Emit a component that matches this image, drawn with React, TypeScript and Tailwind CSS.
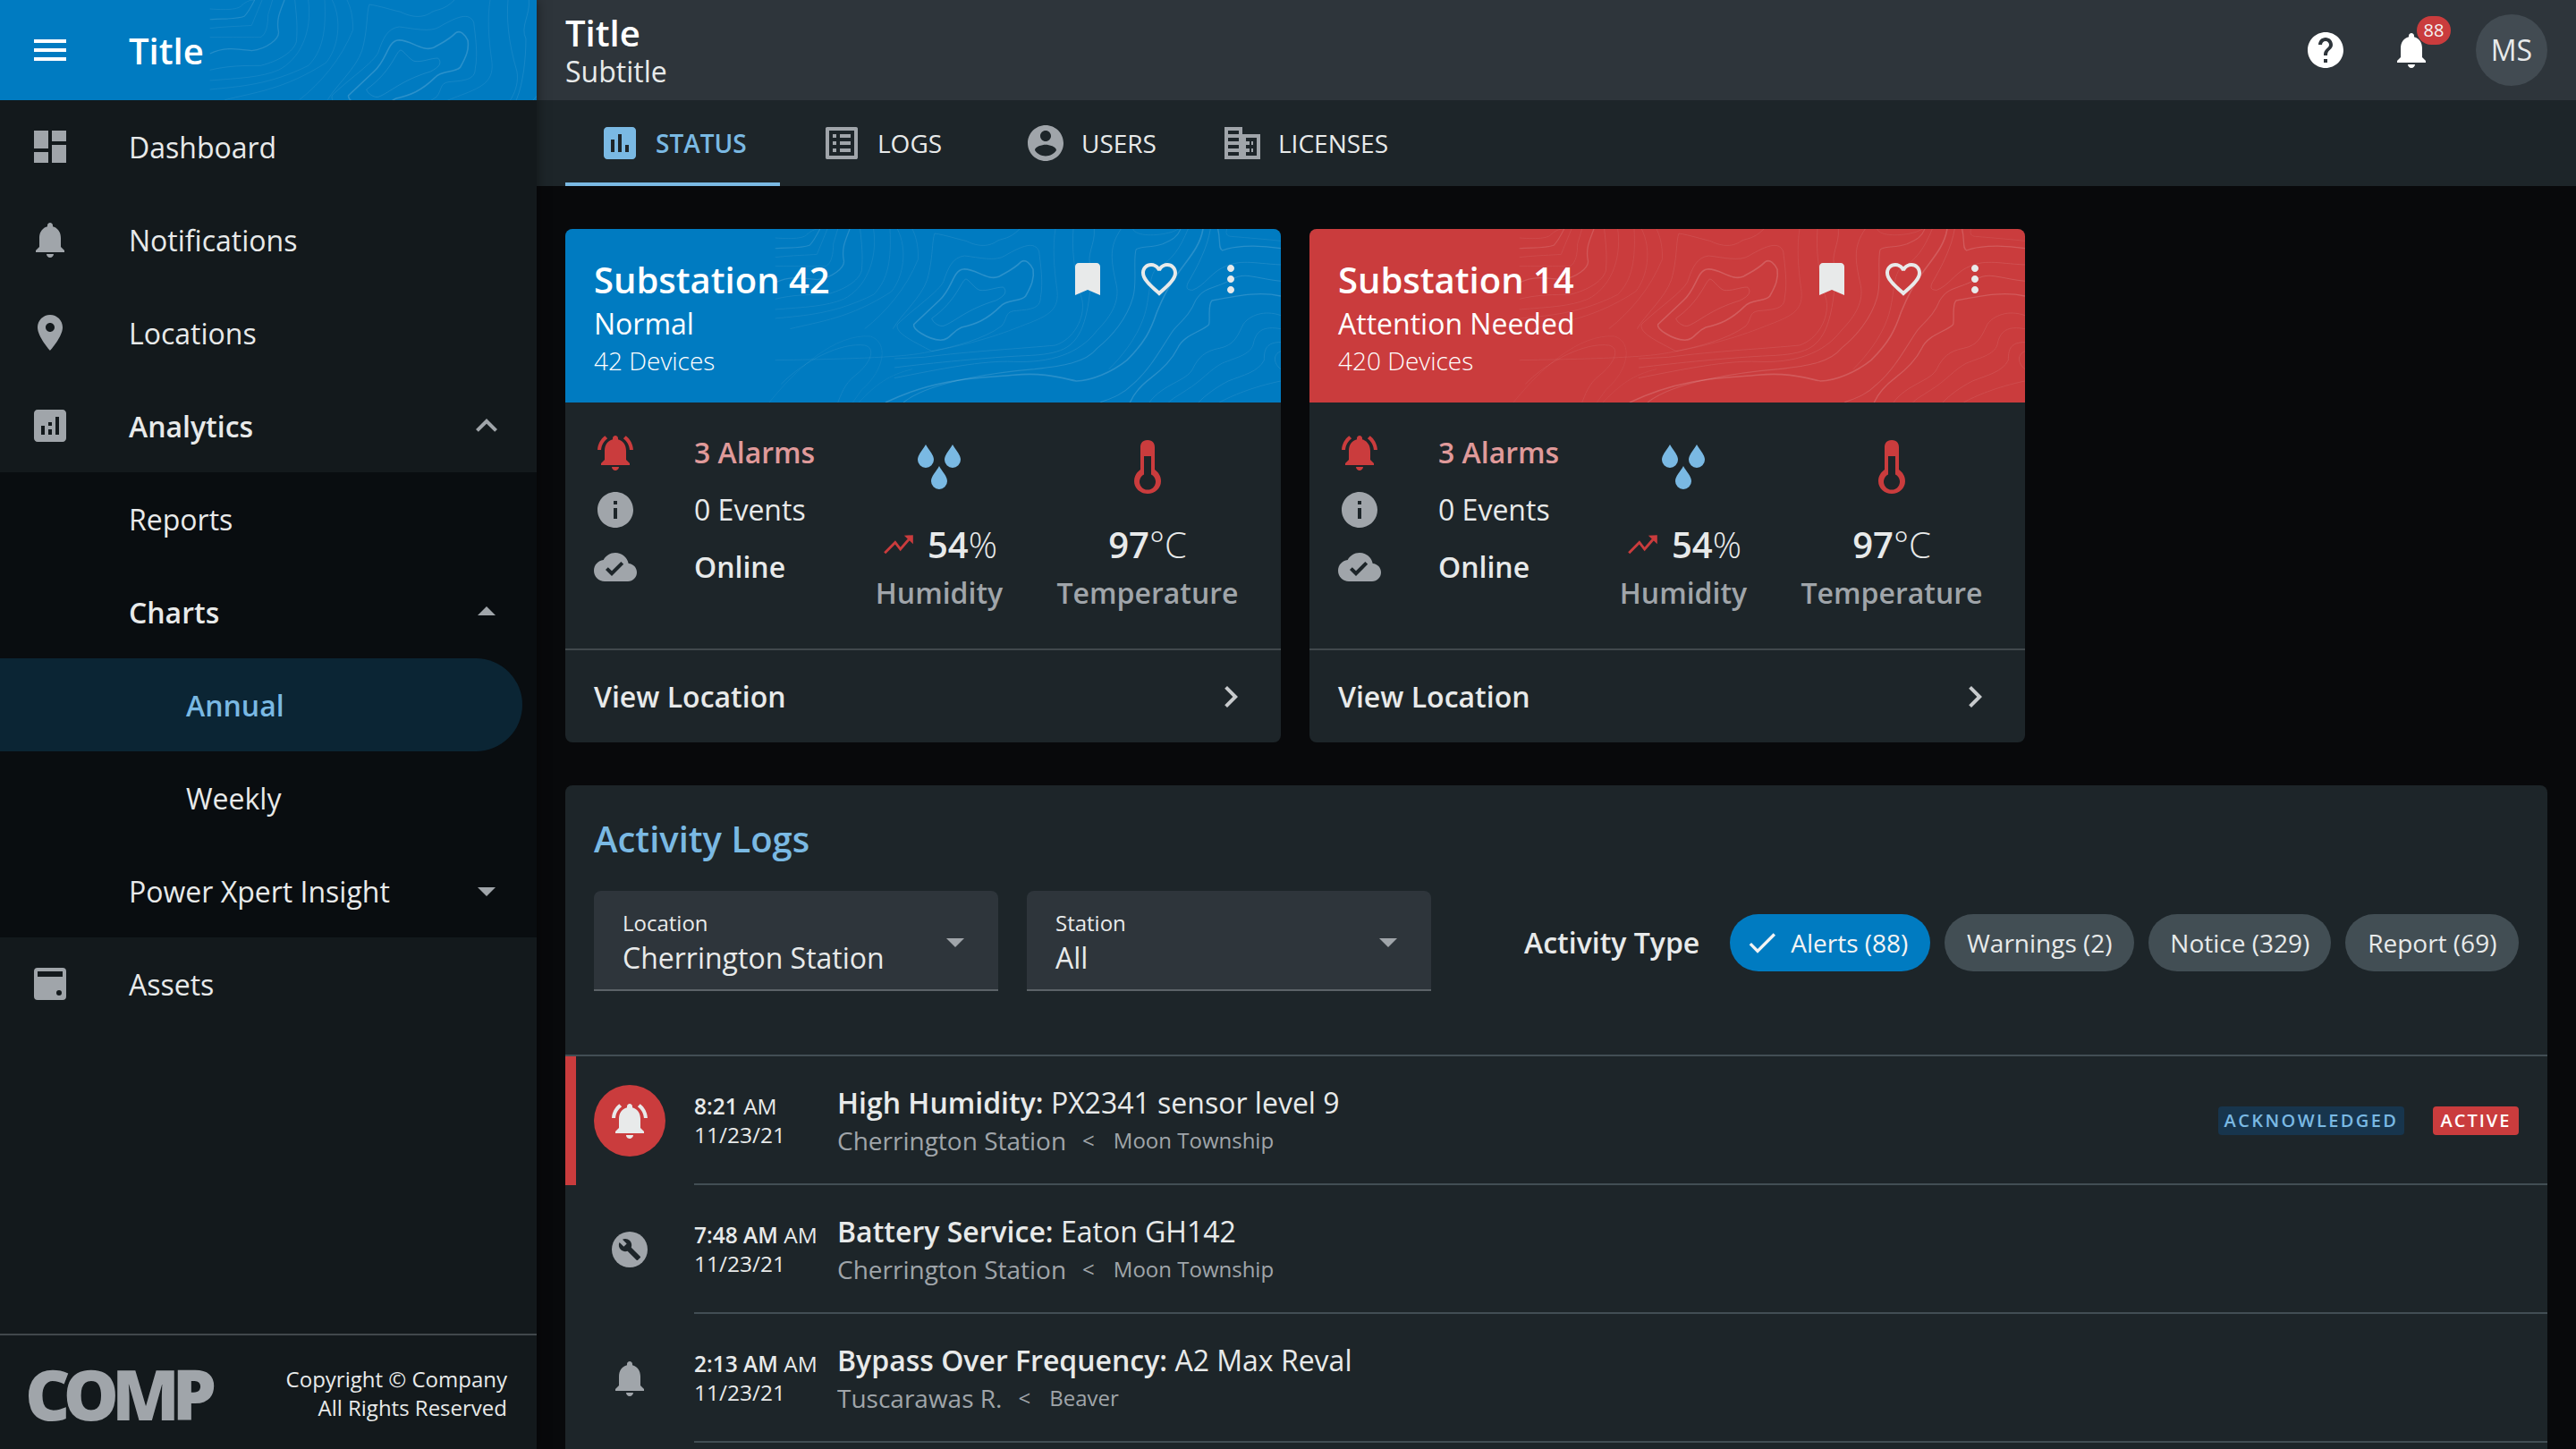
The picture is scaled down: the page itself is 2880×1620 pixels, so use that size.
import type { ReactNode } from "react";

const ICONS = {
  menu: "M3 18h18v-2H3v2zm0-5h18v-2H3v2zm0-7v2h18V6H3z",
  dashboard: "M3 13h8V3H3v10zm0 8h8v-6H3v6zm10 0h8V11h-8v10zm0-18v6h8V3h-8z",
  bell: "M12 22c1.1 0 2-.9 2-2h-4c0 1.1.89 2 2 2zm6-6v-5c0-3.07-1.64-5.64-4.5-6.32V4c0-.83-.67-1.5-1.5-1.5s-1.5.67-1.5 1.5v.68C7.63 5.36 6 7.92 6 11v5l-2 2v1h16v-1l-2-2z",
  bellActive:
    "M7.58 4.08L6.15 2.65C3.75 4.48 2.17 7.3 2.03 10.5h2c.15-2.65 1.51-4.97 3.55-6.42zm12.39 6.42h2c-.15-3.2-1.73-6.02-4.12-7.85l-1.42 1.43c2.02 1.45 3.39 3.77 3.54 6.42zM18 11c0-3.07-1.64-5.64-4.5-6.32V4c0-.83-.67-1.5-1.5-1.5s-1.5.67-1.5 1.5v.68C7.63 5.36 6 7.92 6 11v5l-2 2v1h16v-1l-2-2v-5zm-6 11c.14 0 .27-.01.4-.04.65-.14 1.18-.58 1.44-1.18.1-.24.15-.5.15-.78h-4c.01 1.1.9 2 2.01 2z",
  place:
    "M12 2C8.13 2 5 5.13 5 9c0 5.25 7 13 7 13s7-7.75 7-13c0-3.87-3.13-7-7-7zm0 9.5c-1.38 0-2.5-1.12-2.5-2.5s1.12-2.5 2.5-2.5 2.5 1.12 2.5 2.5-1.12 2.5-2.5 2.5z",
  analytics:
    "M19 3H5c-1.1 0-2 .9-2 2v14c0 1.1.9 2 2 2h14c1.1 0 2-.9 2-2V5c0-1.1-.9-2-2-2zM9 17H7v-5h2v5zm4 0h-2v-3h2v3zm0-5h-2v-2h2v2zm4 5h-2V7h2v10z",
  assessment:
    "M19 3H5c-1.1 0-2 .9-2 2v14c0 1.1.9 2 2 2h14c1.1 0 2-.9 2-2V5c0-1.1-.9-2-2-2zM9 17H7v-7h2v7zm4 0h-2V7h2v10zm4 0h-2v-4h2v4z",
  assets:
    "M5 3h14a2 2 0 0 1 2 2v14a2 2 0 0 1-2 2H5a2 2 0 0 1-2-2V5a2 2 0 0 1 2-2zm0 2v3h14V5H5zm12 10.5a1.5 1.5 0 1 0 0 3 1.5 1.5 0 0 0 0-3z",
  expandLess: "M12 8l-6 6 1.41 1.41L12 10.83l4.59 4.58L18 14z",
  dropUp: "M7 14l5-5 5 5z",
  dropDown: "M7 10l5 5 5-5z",
  help: "M12 2C6.48 2 2 6.48 2 12s4.48 10 10 10 10-4.48 10-10S17.52 2 12 2zm1 17h-2v-2h2v2zm2.07-7.75l-.9.92C13.45 12.9 13 13.5 13 15h-2v-.5c0-1.1.45-2.1 1.17-2.83l1.24-1.26c.37-.36.59-.86.59-1.41 0-1.1-.9-2-2-2s-2 .9-2 2H8c0-2.21 1.79-4 4-4s4 1.79 4 4c0 .88-.36 1.68-.93 2.25z",
  listAlt:
    "M19 5v14H5V5h14m1.1-2H3.9c-.5 0-.9.4-.9.9v16.2c0 .4.4.9.9.9h16.2c.4 0 .9-.5.9-.9V3.9c0-.5-.5-.9-.9-.9zM11 7h6v2h-6V7zm0 4h6v2h-6v-2zm0 4h6v2h-6zM7 7h2v2H7zm0 4h2v2H7zm0 4h2v2H7z",
  account:
    "M12 2C6.48 2 2 6.48 2 12s4.48 10 10 10 10-4.48 10-10S17.52 2 12 2zm0 3c1.66 0 3 1.34 3 3s-1.34 3-3 3-3-1.34-3-3 1.34-3 3-3zm0 14.2c-2.5 0-4.71-1.28-6-3.22.03-1.99 4-3.08 6-3.08 1.99 0 5.97 1.09 6 3.08-1.29 1.94-3.5 3.22-6 3.22z",
  business:
    "M2 3h10v4h10v14H2V3zM4 5v2h6V5H4zM4 9v2h6V9H4zM4 13v2h6v-2H4zM4 17v2h6v-2H4zM14 9v2h2v2h-2v2h2v2h-2v2h6V9h-6zM17 11v2h1v-2h-1zM17 15v2h1v-2h-1z",
  bookmark: "M17 3H7c-1.1 0-2 .9-2 2v16l7-3 7 3V5c0-1.1-.9-2-2-2z",
  heart:
    "M16.5 3c-1.74 0-3.41.81-4.5 2.09C10.91 3.81 9.24 3 7.5 3 4.42 3 2 5.42 2 8.5c0 3.78 3.4 6.86 8.55 11.54L12 21.35l1.45-1.32C18.6 15.36 22 12.28 22 8.5 22 5.42 19.58 3 16.5 3zm-4.4 15.55l-.1.1-.1-.1C7.14 14.24 4 11.39 4 8.5 4 6.5 5.5 5 7.5 5c1.54 0 3.04.99 3.57 2.36h1.87C13.46 5.99 14.96 5 16.5 5c2 0 3.5 1.5 3.5 3.5 0 2.89-3.14 5.74-7.9 10.05z",
  more: "M12 8c1.1 0 2-.9 2-2s-.9-2-2-2-2 .9-2 2 .9 2 2 2zm0 2c-1.1 0-2 .9-2 2s.9 2 2 2 2-.9 2-2-.9-2-2-2zm0 6c-1.1 0-2 .9-2 2s.9 2 2 2 2-.9 2-2-.9-2-2-2z",
  info: "M12 2C6.48 2 2 6.48 2 12s4.48 10 10 10 10-4.48 10-10S17.52 2 12 2zm1 15h-2v-6h2v6zm0-8h-2V7h2v2z",
  cloudDone:
    "M19.35 10.04C18.67 6.59 15.64 4 12 4 9.11 4 6.6 5.64 5.35 8.04 2.34 8.36 0 10.91 0 14c0 3.31 2.69 6 6 6h13c2.76 0 5-2.24 5-5 0-2.64-2.05-4.78-4.65-4.96zM10 17l-3.5-3.5 1.41-1.41L10 14.17 15.18 9l1.41 1.41L10 17z",
  chevron: "M10 6L8.59 7.41 13.17 12l-4.58 4.59L10 18l6-6z",
  check: "M9 16.17L4.83 12l-1.42 1.41L9 19 21 7l-1.41-1.41z",
};

function Icon({ d, className = "w-12 h-12" }: { d: string; className?: string }) {
  return (
    <svg viewBox="0 0 24 24" className={`${className} shrink-0 fill-current`} fillRule="evenodd">
      <path d={d} />
    </svg>
  );
}

// contour lines of the header background, the same picture in the sidebar and the cards
const TOPO: [string, number, number][] = [
  ["M240 168C225 170 210 240 125 300C130 315 150 328 165 325C205 310 240 270 340 240C370 225 380 210 365 195C340 195 310 210 285 205C270 200 250 170 240 168Z", 0.2, 1.5],
  ["M230 135C195 140 195 200 150 240L65 320C60 335 110 370 155 373C190 370 190 345 225 330C270 320 310 305 355 260C375 235 425 245 440 225C460 190 470 165 465 135C455 115 440 100 425 110C400 135 385 140 350 160C310 175 270 130 230 135Z", 0.26, 3],
  ["M235 90C195 95 180 130 165 175C150 210 60 270 10 320C0 350 70 380 125 410C200 395 300 370 360 325C380 300 370 280 400 275C450 270 490 270 490 230C500 180 490 120 485 75C470 40 430 55 370 90C340 110 280 95 235 90Z", 0.16, 1.5],
  ["M135 15C125 40 130 100 110 170C90 230 20 290 -5 335M135 15C170 20 215 35 240 40C270 55 310 65 345 40C365 30 385 35 420 0", 0.16, 1.5],
  ["M540 0C530 60 535 130 545 200C555 270 520 290 440 320C400 335 300 380 100 415C50 425 -50 435 -400 440", 0.14, 1.5],
  ["M600 0C595 60 600 140 630 240C640 300 600 370 540 390C440 400 250 410 100 430L0 435", 0.16, 1.5],
  ["M670 0C675 50 640 90 660 130C660 200 650 280 630 330C600 400 560 420 440 425C320 430 120 450 0 465", 0.18, 1.5],
  ["M760 0C720 60 725 100 745 190C755 240 730 290 680 340C620 420 520 450 400 445C300 440 150 470 0 500", 0.18, 1.5],
  ["M960 0C950 25 935 35 900 50C860 65 820 55 810 70C800 110 815 180 800 230C780 300 730 360 680 400C640 450 560 460 470 470C350 480 120 510 30 582", 0.2, 2],
  ["M1035 0C1025 60 985 100 950 150C920 190 900 230 880 280C860 340 840 380 780 440C730 480 660 510 610 510C560 500 500 480 400 490C300 500 150 495 -30 582", 0.24, 3],
  ["M985 0C960 60 930 110 880 130C850 160 860 230 835 300C810 370 760 430 720 470", 0.16, 1.5],
  ["M800 0C810 25 880 25 930 10C945 5 950 0 955 0", 0.14, 1.5],
  ["M1060 0C1050 60 1020 120 985 180C975 200 985 205 1000 205C1040 190 1060 150 1100 130C1160 100 1200 115 1296 120", 0.2, 1.5],
  ["M1085 0C1095 40 1085 65 1100 72C1130 60 1200 50 1296 65", 0.24, 2.5],
  ["M1115 0C1110 15 1115 25 1130 25C1190 30 1250 35 1296 40", 0.14, 1.5],
  ["M1296 175C1220 170 1180 140 1130 170C1080 200 1040 190 1010 240C990 290 960 310 935 340C900 390 860 470 800 520C760 560 720 570 690 582", 0.2, 2],
  ["M1296 225C1230 210 1170 220 1065 240C1050 255 1060 300 1055 320C1030 345 970 355 950 400C930 440 900 470 860 500C820 530 800 560 790 582", 0.24, 2.5],
  ["M1296 290C1240 270 1190 290 1170 320C1150 360 1140 390 1090 400C1040 410 1020 430 1000 470C980 510 900 520 855 582", 0.18, 1.5],
  ["M1296 335C1240 325 1215 340 1205 380C1200 420 1150 430 1100 450C1060 470 1030 510 980 540C950 560 930 570 920 582", 0.16, 1.5],
  ["M1296 380C1250 380 1240 400 1240 440C1220 480 1170 490 1120 510C1080 530 1040 560 1020 582", 0.18, 1.5],
  ["M1296 410C1270 420 1270 450 1296 470", 0.18, 1.5],
  ["M1296 510C1200 530 1130 560 1090 582", 0.16, 1.5],
  ["M-400 30C-330 35 -300 30 -290 15C-280 8 -270 0 -250 0", 0.14, 1.5],
  ["M-400 65C-350 62 -310 65 -285 55C-270 40 -260 20 -250 0", 0.2, 2],
  ["M-400 95C-340 88 -290 88 -260 85L-225 0", 0.14, 1.5],
  ["M-400 125C-330 125 -260 125 -230 125C-210 115 -205 80 -205 50L-190 0", 0.14, 1.5],
  ["M-400 180C-350 155 -300 165 -260 170C-210 165 -165 130 -170 105C-178 65 -165 40 -150 0", 0.22, 2.5],
  ["M-400 235C-340 220 -280 220 -230 220C-170 205 -120 175 -110 140C-105 90 -110 50 -115 0", 0.16, 1.5],
  ["M-400 270C-300 262 -230 260 -170 235C-100 200 -55 110 -70 0", 0.14, 1.5],
  ["M-400 300C-300 290 -200 285 -70 220C-20 170 -10 100 -15 0", 0.14, 1.5],
  ["M-350 335C-250 310 -150 300 -10 210C30 160 45 70 10 0", 0.14, 1.5],
  ["M-100 335C-30 280 40 200 80 100C80 50 70 20 60 0", 0.14, 1.5],
  ["M-380 520C-300 440 -180 380 -100 390C-60 400 -80 450 -130 490C-170 520 -180 560 -190 582", 0.14, 1.5],
  ["M-420 582C-330 470 -200 350 -80 360C-20 380 -30 470 -110 540L-140 582", 0.1, 1.5],
  ["M-120 582C-60 520 -20 490 60 470", 0.1, 1.5],
];

function TopoLines() {
  return (
    <svg width="800" height="194" className="absolute left-0 top-0 pointer-events-none" fill="none">
      <g transform="translate(368 0) scale(0.3333)">
        {TOPO.map(([d, o, w], i) => (
          <path key={i} d={d} stroke="#ffffff" strokeOpacity={o * 0.65} strokeWidth={w * 1.6} />
        ))}
      </g>
    </svg>
  );
}

function NavRow({
  icon,
  label,
  strong,
  right,
  indent = "pl-[144px]",
  active,
}: {
  icon?: string;
  label: string;
  strong?: boolean;
  right?: string;
  indent?: string;
  active?: boolean;
}) {
  return (
    <div
      className={`relative flex h-[104px] items-center ${active ? "w-[584px] rounded-r-full bg-[#0b2534]" : ""}`}
    >
      {icon && (
        <span className="absolute left-8 text-[#a0a5aa]">
          <Icon d={icon} />
        </span>
      )}
      <span
        className={`${indent} pt-px text-[32px] ${strong ? "font-semibold" : ""} ${active ? "font-semibold text-[#7ab9e3]" : "text-[#e8eaea]"}`}
      >
        {label}
      </span>
      {right && (
        <span className="absolute right-8 text-[#a0a5aa]">
          <Icon d={right} />
        </span>
      )}
    </div>
  );
}

function Sidebar() {
  return (
    <aside className="relative z-10 flex h-full w-[600px] shrink-0 flex-col bg-[#13191c] shadow-[0_0_12px_rgba(0,0,0,0.5)]">
      <div className="relative flex h-[112px] shrink-0 items-center overflow-hidden bg-[#007bc1] text-white">
        <TopoLines />
        <span className="absolute left-8">
          <Icon d={ICONS.menu} />
        </span>
        <span className="relative pl-[144px] pt-px text-[40px] font-semibold">Title</span>
      </div>
      <nav className="flex-1">
        <NavRow icon={ICONS.dashboard} label="Dashboard" />
        <NavRow icon={ICONS.bell} label="Notifications" />
        <NavRow icon={ICONS.place} label="Locations" />
        <NavRow icon={ICONS.analytics} label="Analytics" strong right={ICONS.expandLess} />
        <div className="bg-[#090d10]">
          <NavRow label="Reports" />
          <NavRow label="Charts" strong right={ICONS.dropUp} />
          <NavRow label="Annual" indent="pl-[208px]" active />
          <NavRow label="Weekly" indent="pl-[208px]" />
          <NavRow label="Power Xpert Insight" right={ICONS.dropDown} />
        </div>
        <NavRow icon={ICONS.assets} label="Assets" />
      </nav>
      <div className="flex h-[129px] shrink-0 items-center justify-between border-t-2 border-[#41484c] pl-7 pr-[33px] pt-[3px]">
        <span className="text-[78px] leading-none font-extrabold tracking-[-0.1em] text-[#a0a5aa]">COMP</span>
        <div className="text-right text-[24px] leading-[32px] text-[#e8eaea]">
          <div>Copyright © Company</div>
          <div>All Rights Reserved</div>
        </div>
      </div>
    </aside>
  );
}

function TopBar() {
  return (
    <header className="flex h-[112px] shrink-0 items-center justify-between bg-[#2e353b] pl-8 pr-8 text-white">
      <div>
        <div className="text-[40px] leading-[48px] font-semibold">Title</div>
        <div className="text-[32px] leading-[38px] text-[#e8eaea]">Subtitle</div>
      </div>
      <div className="flex items-center">
        <Icon d={ICONS.help} />
        <div className="relative ml-12">
          <Icon d={ICONS.bell} />
          <span className="absolute left-[30px] top-[-14px] flex h-8 w-[38px] items-center justify-center rounded-full bg-[#ca3c3d] text-[20px] text-[#f4f4f4]">
            88
          </span>
        </div>
        <div className="ml-12 flex h-20 w-20 items-center justify-center rounded-full bg-[#424b52] text-[32px] text-[#e8eaea]">
          MS
        </div>
      </div>
    </header>
  );
}

const TABS = [
  { label: "STATUS", icon: ICONS.assessment, cls: "w-[240px] pl-[37px] border-y-4 border-t-transparent border-b-[#7ab9e3] text-[#7ab9e3] font-semibold" },
  { label: "LOGS", icon: ICONS.listAlt, cls: "w-[224px] pl-[45px]" },
  { label: "USERS", icon: ICONS.account, cls: "w-[221px] pl-[49px]" },
  { label: "LICENSES", icon: ICONS.business, cls: "w-[224px] pl-[48px]" },
];

function TabBar() {
  return (
    <div className="flex h-[96px] shrink-0 bg-[#1d2529] pl-8">
      {TABS.map((t, i) => (
        <div key={t.label} className={`flex h-full items-center gap-4 text-[28px] ${t.cls} ${i ? "text-[#e8eaea]" : ""}`}>
          <span className={i ? "text-[#a0a5aa]" : ""}>
            <Icon d={t.icon} />
          </span>
          {t.label}
        </div>
      ))}
    </div>
  );
}

function Drops() {
  const d = "M9 0C12 6 18 11 18 17A9 9 0 0 1 0 17C0 11 6 6 9 0Z";
  return (
    <svg width="48" height="50" viewBox="0 0 48 50" className="fill-[#7ab9e3]">
      <path d={d} />
      <path d={d} transform="translate(30 0)" />
      <path d={d} transform="translate(15 24)" />
    </svg>
  );
}

function Thermometer() {
  return (
    <svg width="30" height="60" viewBox="0 0 30 60" className="fill-[#ca3c3d]" fillRule="evenodd">
      <path d="M15 0C9 0 7 4 7 8V33C3 36 0 40 0 46C0 54 7 60 15 60C23 60 30 54 30 46C30 40 27 36 23 33V8C23 4 21 0 15 0ZM11 18H19V38.500A9 9 0 1 1 11 38.500Z" />
    </svg>
  );
}

function TrendUp() {
  return (
    <svg viewBox="0 0 24 24" className="h-10 w-10 shrink-0" fill="none">
      <path d="M2.5 17.500L9.500 10.500L13 15L19.500 7.500" stroke="#ca3c3d" strokeWidth="1.700" />
      <path d="M15.500 5.800L21.500 5.500L21.500 11.500Z" fill="#ca3c3d" />
    </svg>
  );
}

function StatRow({ icon, iconCls, children }: { icon: string; iconCls: string; children: ReactNode }) {
  return (
    <div className="flex h-16 items-center gap-16">
      <span className={iconCls}>
        <Icon d={icon} />
      </span>
      {children}
    </div>
  );
}

function StationCard({
  name,
  status,
  devices,
  color,
}: {
  name: string;
  status: string;
  devices: string;
  color: string;
}) {
  return (
    <section className="h-[574px] w-[800px] overflow-hidden rounded-lg bg-[#1d2529]">
      <div className={`relative flex h-[194px] items-start justify-between overflow-hidden px-8 ${color} text-white`}>
        <TopoLines />
        <div className="relative pt-[30px]">
          <div className="text-[40px] leading-[54px] font-semibold">{name}</div>
          <div className="text-[32px] leading-[44px]">{status}</div>
          <div className="text-[28px] leading-[38px] font-light">{devices}</div>
        </div>
        <div className="relative flex gap-8 pt-8 text-[#e8eaea]">
          <Icon d={ICONS.bookmark} />
          <Icon d={ICONS.heart} />
          <Icon d={ICONS.more} />
        </div>
      </div>
      <div className="flex h-[275px] gap-4 pt-6 pl-8">
        <div className="w-[270px] shrink-0 text-[32px] text-[#e8eaea]">
          <StatRow icon={ICONS.bellActive} iconCls="text-[#ca3c3d]">
            <span className="font-semibold text-[#e09a9a]">3 Alarms</span>
          </StatRow>
          <StatRow icon={ICONS.info} iconCls="text-[#a0a5aa]">
            0 Events
          </StatRow>
          <StatRow icon={ICONS.cloudDone} iconCls="text-[#a0a5aa]">
            <span className="font-semibold">Online</span>
          </StatRow>
        </div>
        <div className="flex w-[200px] shrink-0 flex-col items-center">
          <div className="flex h-[96px] items-center justify-center">
            <Drops />
          </div>
          <div className="flex h-[78px] items-center text-[#e8eaea]">
            <span className="mr-3">
              <TrendUp />
            </span>
            <span className="text-[40px] font-semibold">54</span>
            <span className="text-[40px] font-light">%</span>
          </div>
          <div className="text-[32px] leading-[30px] font-semibold text-[#a0a5aa]">Humidity</div>
        </div>
        <div className="flex w-[234px] shrink-0 flex-col items-center">
          <div className="flex h-[96px] items-center justify-center">
            <Thermometer />
          </div>
          <div className="flex h-[78px] items-center text-[#e8eaea]">
            <span className="text-[40px] font-semibold">97</span>
            <span className="text-[40px] font-light">°C</span>
          </div>
          <div className="text-[32px] leading-[30px] font-semibold text-[#a0a5aa]">Temperature</div>
        </div>
      </div>
      <div className="flex h-[105px] items-center justify-between border-t-2 border-[#41484c] px-8 text-[32px] font-semibold text-[#e8eaea]">
        View Location
        <span className="text-[#c8cbcd]">
          <Icon d={ICONS.chevron} />
        </span>
      </div>
    </section>
  );
}

function Select({ label, value }: { label: string; value: string }) {
  return (
    <div className="relative h-[112px] w-[452px] rounded-t-lg border-b-2 border-[#5c6368] bg-[#2e353b] pl-8 pt-5">
      <div className="text-[24px] leading-[32px] text-[#e8eaea]">{label}</div>
      <div className="text-[32px] leading-[46px] text-[#e8eaea]">{value}</div>
      <span className="absolute right-6 top-[33px] text-[#a0a5aa]">
        <Icon d={ICONS.dropDown} />
      </span>
    </div>
  );
}

const CHIPS = [
  { label: "Warnings (2)", w: "w-[212px]" },
  { label: "Notice (329)", w: "w-[204px]" },
  { label: "Report (69)", w: "w-[194px]" },
];

const LOGS = [
  {
    time: "8:21",
    suffix: "AM",
    title: "High Humidity:",
    detail: "PX2341 sensor level 9",
    station: "Cherrington Station",
    area: "Moon Township",
    kind: "alarm",
  },
  {
    time: "7:48 AM",
    suffix: "AM",
    title: "Battery Service:",
    detail: "Eaton GH142",
    station: "Cherrington Station",
    area: "Moon Township",
    kind: "service",
  },
  {
    time: "2:13 AM",
    suffix: "AM",
    title: "Bypass Over Frequency:",
    detail: "A2 Max Reval",
    station: "Tuscarawas R.",
    area: "Beaver",
    kind: "note",
  },
];

function LogIcon({ kind }: { kind: string }) {
  if (kind === "alarm") {
    return (
      <div className="flex h-20 w-20 items-center justify-center rounded-full bg-[#ca3c3d] text-[#e8eaea]">
        <Icon d={ICONS.bellActive} />
      </div>
    );
  }
  if (kind === "service") {
    return (
      <svg viewBox="0 0 24 24" className="h-12 w-12">
        <circle cx="12" cy="12" r="10" fill="#a0a5aa" />
        <path
          transform="translate(5.4 5.4) scale(0.55)"
          fill="#1d2529"
          d="M22.7 19l-9.1-9.1c.9-2.3.4-5-1.5-6.9-2-2-5-2.4-7.4-1.3L9 6 6 9 1.6 4.7C.4 7.1.9 10.1 2.9 12.1c1.9 1.9 4.6 2.4 6.9 1.5l9.1 9.1c.4.4 1 .4 1.4 0l2.3-2.3c.5-.4.5-1.1.1-1.4z"
        />
      </svg>
    );
  }
  return (
    <span className="text-[#a0a5aa]">
      <Icon d={ICONS.bell} />
    </span>
  );
}

function LogRow({ log }: { log: (typeof LOGS)[number] }) {
  const alarm = log.kind === "alarm";
  return (
    <div className="relative flex h-[144px]">
      {alarm && <div className="absolute bottom-0 left-0 top-0 w-3 bg-[#ca3c3d]" />}
      <div className="flex w-[144px] shrink-0 items-center justify-center pl-8 pr-8">
        <LogIcon kind={log.kind} />
      </div>
      <div className="flex flex-1 items-center border-b-2 border-[#424e54] pt-[2px]">
        <div className="w-[160px] shrink-0 whitespace-nowrap text-[24.5px] leading-[32px] text-[#e8eaea]">
          <div>
            <span className="font-semibold">{log.time}</span> {log.suffix}
          </div>
          <div>11/23/21</div>
        </div>
        <div className="flex-1">
          <div className="text-[32px] leading-[44px] text-[#e8eaea]">
            <span className="font-semibold">{log.title}</span> {log.detail}
          </div>
          <div className="flex items-center text-[#a0a5aa]">
            <span className="text-[28px] leading-[40px]">{log.station}</span>
            <span className="ml-[18px] mr-[21px] text-[24px]">&lt;</span>
            <span className="text-[24px] leading-[40px]">{log.area}</span>
          </div>
        </div>
        {alarm && (
          <div className="flex gap-8 pr-8">
            <span className="flex h-8 w-[208px] items-center justify-center rounded bg-[#17354d] text-[20px] font-semibold tracking-[0.12em] text-[#7ab9e3]">
              ACKNOWLEDGED
            </span>
            <span className="flex h-8 w-24 items-center justify-center rounded bg-[#ca3c3d] text-[20px] font-semibold tracking-[0.1em] text-white">
              ACTIVE
            </span>
          </div>
        )}
      </div>
    </div>
  );
}

function ActivityLogs() {
  return (
    <section className="mt-12 h-[800px] w-[2216px] rounded-lg bg-[#1d2529]">
      <h2 className="px-8 pt-[31px] text-[40px] leading-[58px] font-semibold text-[#7ab9e3]">Activity Logs</h2>
      <div className="mt-[29px] flex items-center pl-8">
        <div className="flex gap-8">
          <Select label="Location" value="Cherrington Station" />
          <Select label="Station" value="All" />
        </div>
        <span className="ml-[104px] mt-1 text-[32px] font-semibold text-[#e8eaea]">Activity Type</span>
        <div className="ml-[34px] mt-1 flex gap-4">
          <div className="flex h-16 w-[224px] items-center gap-3 rounded-full bg-[#007bc1] pl-4 text-[28px] text-[#f4f4f4]">
            <Icon d={ICONS.check} className="h-10 w-10" />
            Alerts (88)
          </div>
          {CHIPS.map((c) => (
            <div key={c.label} className={`flex h-16 ${c.w} items-center justify-center rounded-full bg-[#424e54] text-[28px] text-[#e8eaea]`}>
              {c.label}
            </div>
          ))}
        </div>
      </div>
      <div className="mt-[71px] border-t-2 border-[#424e54]">
        {LOGS.map((log) => (
          <LogRow key={log.title} log={log} />
        ))}
      </div>
    </section>
  );
}

export default function App() {
  return (
    <div className="flex h-screen w-screen overflow-hidden bg-[#08090b] font-['Open_Sans',sans-serif]">
      <Sidebar />
      <main className="flex min-w-0 flex-1 flex-col">
        <TopBar />
        <TabBar />
        <div className="flex-1 overflow-hidden px-8 pt-12">
          <div className="flex gap-8">
            <StationCard name="Substation 42" status="Normal" devices="42 Devices" color="bg-[#007bc1]" />
            <StationCard name="Substation 14" status="Attention Needed" devices="420 Devices" color="bg-[#ca3c3d]" />
          </div>
          <ActivityLogs />
        </div>
      </main>
    </div>
  );
}
